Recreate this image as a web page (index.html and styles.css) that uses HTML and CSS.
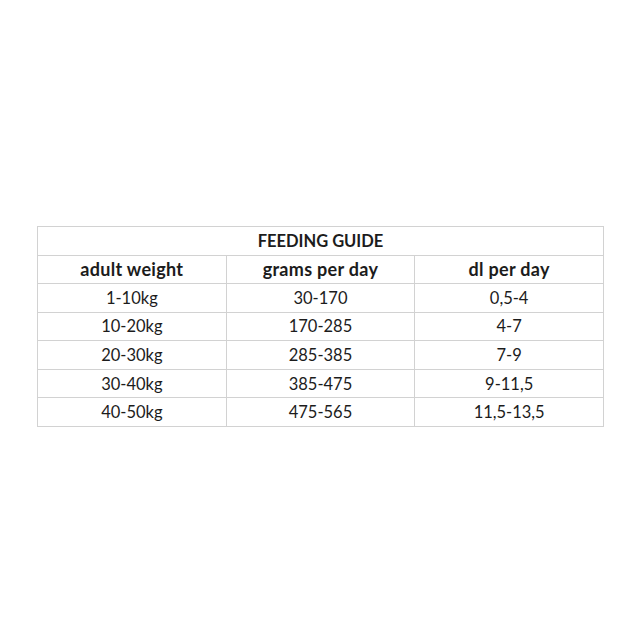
FILE: index.html
```html
<!DOCTYPE html>
<html>
<head>
<meta charset="utf-8">
<link rel="stylesheet" href="styles.css">
</head>
<body>
<div class="page">
  <table class="guide">
    <tr class="title-row"><th colspan="3">FEEDING GUIDE</th></tr>
    <tr class="head-row"><th>adult weight</th><th>grams per day</th><th>dl per day</th></tr>
    <tr><td>1-10kg</td><td>30-170</td><td>0,5-4</td></tr>
    <tr><td>10-20kg</td><td>170-285</td><td>4-7</td></tr>
    <tr><td>20-30kg</td><td>285-385</td><td>7-9</td></tr>
    <tr><td>30-40kg</td><td>385-475</td><td>9-11,5</td></tr>
    <tr><td>40-50kg</td><td>475-565</td><td>11,5-13,5</td></tr>
  </table>
</div>
</body>
</html>
```
FILE: styles.css
```css
html, body {
  margin: 0;
  padding: 0;
  background: #ffffff;
}
.page {
  width: 640px;
  height: 640px;
  padding: 226px 0 0 37px;
  box-sizing: border-box;
}
.guide {
  border-collapse: collapse;
  width: 567px;
  table-layout: fixed;
  font-family: Lato, "Open Sans", sans-serif;
  color: #1c1c1c;
  font-size: 16.5px;
}
.guide th, .guide td {
  border: 1px solid #d2d2d2;
  text-align: center;
  padding: 0;
  height: 27.57px;
  line-height: 20px;
}
.guide th {
  font-weight: 700;
}
.guide td {
  font-weight: 400;
}
.title-row th {
  font-size: 16.5px;
}
.head-row th {
  font-size: 18px;
  letter-spacing: 0.3px;
}
```
